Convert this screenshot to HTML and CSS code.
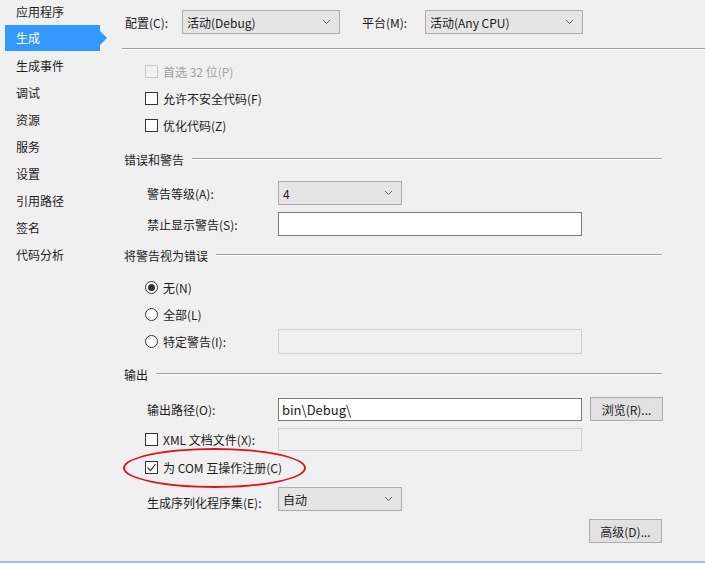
FILE: index.html
```html
<!DOCTYPE html>
<html>
    <head>
        <meta charset="utf-8">
        <title>生成</title>
        <link rel="stylesheet" href="styles.css">
    </head>
    <body>
        <div class="page">
            <ul class="nav">
                <li>应用程序</li>
                <li class="active">生成</li>
                <li>生成事件</li>
                <li>调试</li>
                <li>资源</li>
                <li>服务</li>
                <li>设置</li>
                <li>引用路径</li>
                <li>签名</li>
                <li>代码分析</li>
            </ul>
            <div class="main">
                <div class="row top">
                    <label class="cfg-label">配置(C):</label>
                    <div class="combo wide"><span>活动(Debug)</span><svg width="9" height="6" viewBox="0 0 9 6"><polyline points="1,1 4.5,4.5 8,1" fill="none" stroke="#606060" stroke-width="1"/></svg></div>
                    <label class="plat-label">平台(M):</label>
                    <div class="combo wide"><span>活动(Any CPU)</span><svg width="9" height="6" viewBox="0 0 9 6"><polyline points="1,1 4.5,4.5 8,1" fill="none" stroke="#606060" stroke-width="1"/></svg></div>
                </div>
                <div class="divider"></div>

                <div class="row check disabled first"><span class="box"></span>首选 32 位(P)</div>
                <div class="row check"><span class="box"></span>允许不安全代码(F)</div>
                <div class="row check"><span class="box"></span>优化代码(Z)</div>

                <div class="section s1"><span>错误和警告</span><i></i></div>
                <div class="row field f-level">
                    <label>警告等级(A):</label>
                    <div class="combo short"><span>4</span><svg width="9" height="6" viewBox="0 0 9 6"><polyline points="1,1 4.5,4.5 8,1" fill="none" stroke="#606060" stroke-width="1"/></svg></div>
                </div>
                <div class="row field f-suppress">
                    <label>禁止显示警告(S):</label>
                    <div class="textbox"></div>
                </div>

                <div class="section s2"><span>将警告视为错误</span><i></i></div>
                <div class="row radio first-radio"><span class="dot on"></span>无(N)</div>
                <div class="row radio"><span class="dot"></span>全部(L)</div>
                <div class="row radio specific">
                    <span class="dot"></span><span class="radio-text">特定警告(I):</span>
                    <div class="textbox off"></div>
                </div>

                <div class="section s3"><span>输出</span><i></i></div>
                <div class="row field f-path">
                    <label>输出路径(O):</label>
                    <div class="textbox path">bin\Debug\</div>
                    <div class="btn">浏览(R)...</div>
                </div>
                <div class="row check f-xml">
                    <span class="box"></span><span class="xml-text">XML 文档文件(X):</span>
                    <div class="textbox off"></div>
                </div>
                <div class="row check f-com">
                    <span class="box"><svg width="11" height="11" viewBox="0 0 11 11"><polyline points="1.5,5.5 4.5,8.5 9.5,2" fill="none" stroke="#333" stroke-width="1.2"/></svg></span>为 COM 互操作注册(C)
                    <span class="mark"></span>
                </div>
                <div class="row field f-serial">
                    <label>生成序列化程序集(E):</label>
                    <div class="combo short"><span>自动</span><svg width="9" height="6" viewBox="0 0 9 6"><polyline points="1,1 4.5,4.5 8,1" fill="none" stroke="#606060" stroke-width="1"/></svg></div>
                </div>
                <div class="row f-adv">
                    <div class="btn">高级(D)...</div>
                </div>
            </div>
        </div>
    </body>
</html>
```

FILE: styles.css
```css
*{
    margin: 0;
    padding: 0;
    box-sizing: border-box;
}
html,body{
    background: #f0f0f0;
}
body{
    font-family: "Noto Sans CJK SC", "Microsoft YaHei", sans-serif;
    font-size: 12px;
    color: #1b1b1b;
}
.page{
    height: 563px;
    display: flex;
    overflow: hidden;
    border-bottom: 2px solid #a8b9d6;
}
/* 左侧导航 */
.nav{
    width: 122px;
    flex-shrink: 0;
    list-style: none;
    margin-top: -2px;
}
.nav li{
    height: 27px;
    line-height: 27px;
    margin-left: 5px;
    margin-right: 22px;
    padding-left: 11px;
    position: relative;
}
.nav li.active{
    background: #3399ff;
    color: #fff;
    height: 26px;
    line-height: 26px;
    margin-bottom: 1px;
}
.nav li.active:after{
    content: '';
    position: absolute;
    right: -7px;
    top: 6px;
    border-top: 7px solid transparent;
    border-bottom: 7px solid transparent;
    border-left: 7px solid #3399ff;
}
/* 右侧内容 */
.main{
    flex: 1;
    padding-top: 10px;
}
.row{
    display: flex;
    align-items: center;
}
.top{
    height: 24px;
    padding-left: 3px;
}
.cfg-label{
    width: 57px;
}
.plat-label{
    width: 63px;
    margin-left: 22px;
}
.combo{
    height: 24px;
    background: #e5e5e5;
    border: 1px solid #acacac;
    display: flex;
    align-items: center;
    justify-content: space-between;
    padding: 0 8px 0 4px;
}
.combo.wide{
    width: 158px;
}
.combo.short{
    width: 124px;
}
.divider{
    margin-top: 14px;
    height: 2px;
    border-top: 1px solid #a0a0a0;
    border-bottom: 1px solid #fff;
}
.check{
    height: 27px;
    padding-left: 23px;
}
.check.first{
    margin-top: 8px;
}
.box{
    width: 13px;
    height: 13px;
    border: 1px solid #333;
    background: #fff;
    margin-right: 5px;
    display: flex;
    align-items: center;
    justify-content: center;
}
.disabled{
    color: #a0a0a0;
}
.disabled .box{
    border-color: #c8c8c8;
    background: #f0f0f0;
}
.section{
    display: flex;
    align-items: center;
    height: 20px;
    padding-left: 2px;
    margin-right: 43px;
}
.section i{
    flex: 1;
    height: 2px;
    border-top: 1px solid #a0a0a0;
    border-bottom: 1px solid #fff;
    margin-left: 8px;
}
.s1{
    margin-top: 10px;
}
.s2{
    margin-top: 9px;
}
.s3{
    margin-top: 9px;
}
.field{
    height: 24px;
    padding-left: 25px;
}
.field label{
    width: 131px;
}
.f-level{
    margin-top: 12px;
}
.f-suppress{
    margin-top: 7px;
}
.textbox{
    width: 304px;
    height: 24px;
    background: #fff;
    border: 1px solid #7a7a7a;
    padding: 0 3px;
    display: flex;
    align-items: center;
    font-size: 13px;
}
.textbox.off{
    background: #f0f0f0;
    border-color: #cfcfcf;
}
.textbox.path{
    height: 23px;
}
.radio{
    height: 27px;
    padding-left: 23px;
}
.first-radio{
    margin-top: 9px;
}
.dot{
    width: 13px;
    height: 13px;
    border: 1px solid #333;
    border-radius: 50%;
    background: #fff;
    margin-right: 5px;
    display: flex;
    align-items: center;
    justify-content: center;
}
.dot.on:after{
    content: '';
    width: 7px;
    height: 7px;
    border-radius: 50%;
    background: #333;
}
.radio-text,
.xml-text{
    width: 115px;
}
.specific .textbox{
    height: 25px;
}
.btn{
    width: 73px;
    height: 24px;
    background: #e1e1e1;
    border: 1px solid #adadad;
    display: flex;
    align-items: center;
    justify-content: center;
}
.f-path{
    margin-top: 13px;
}
.f-path .btn{
    margin-left: 8px;
}
.f-xml{
    margin-top: 6px;
    height: 24px;
}
.f-xml .textbox{
    height: 23px;
}
.f-com{
    height: 24px;
    margin-top: 4px;
    position: relative;
}
.mark{
    position: absolute;
    left: 1px;
    top: -7px;
    width: 183px;
    height: 40px;
    border: 2px solid #d8161b;
    border-radius: 50%;
}
.f-serial{
    margin-top: 8px;
}
.f-serial label{
    align-self: flex-end;
}
.f-adv{
    margin-top: 8px;
    justify-content: flex-end;
    margin-right: 43px;
}
```
